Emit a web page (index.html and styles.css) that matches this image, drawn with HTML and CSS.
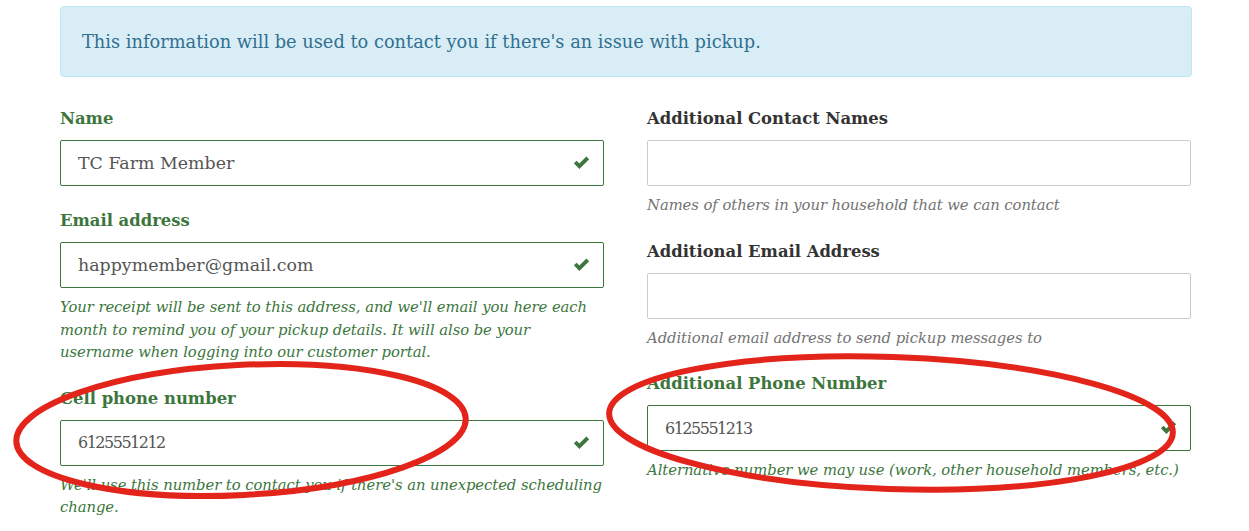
FILE: index.html
```html
<!DOCTYPE html>
<html>
<head>
<meta charset="utf-8">
<link rel="stylesheet" href="styles.css">
</head>
<body>
<div class="page">
  <div class="alert">This information will be used to contact you if there's an issue with pickup.</div>
  <div class="grid">
    <div class="col">
      <div class="group success">
        <label class="label">Name</label>
        <div class="field"><span class="value">TC Farm Member</span><svg class="check" viewBox="0 0 16 13"><path d="M0.8 6.8 L3.4 4.3 L6 6.9 L12.6 0.4 L15.2 3 L6 12.1 Z"/></svg></div>
      </div>
      <div class="group success">
        <label class="label">Email address</label>
        <div class="field"><span class="value">happymember@gmail.com</span><svg class="check" viewBox="0 0 16 13"><path d="M0.8 6.8 L3.4 4.3 L6 6.9 L12.6 0.4 L15.2 3 L6 12.1 Z"/></svg></div>
        <p class="help">Your receipt will be sent to this address, and we'll email you here each month to remind you of your pickup details. It will also be your username when logging into our customer portal.</p>
      </div>
      <div class="group success">
        <label class="label">Cell phone number</label>
        <div class="field"><span class="value num">6125551212</span><svg class="check" viewBox="0 0 16 13"><path d="M0.8 6.8 L3.4 4.3 L6 6.9 L12.6 0.4 L15.2 3 L6 12.1 Z"/></svg></div>
        <p class="help">We'll use this number to contact you if there's an unexpected scheduling change.</p>
      </div>
    </div>
    <div class="col">
      <div class="group">
        <label class="label">Additional Contact Names</label>
        <div class="field"></div>
        <p class="help">Names of others in your household that we can contact</p>
      </div>
      <div class="group">
        <label class="label">Additional Email Address</label>
        <div class="field"></div>
        <p class="help">Additional email address to send pickup messages to</p>
      </div>
      <div class="group success">
        <label class="label">Additional Phone Number</label>
        <div class="field"><span class="value num">6125551213</span><svg class="check" viewBox="0 0 16 13"><path d="M0.8 6.8 L3.4 4.3 L6 6.9 L12.6 0.4 L15.2 3 L6 12.1 Z"/></svg></div>
        <p class="help">Alternative number we may use (work, other household members, etc.)</p>
      </div>
    </div>
  </div>
  <svg class="marks" viewBox="0 0 1249 531" width="1249" height="531">
    <ellipse cx="241" cy="430" rx="225" ry="65" transform="rotate(-3 241 430)"/>
    <ellipse cx="891" cy="423" rx="282" ry="66" transform="rotate(2 891 423)"/>
  </svg>
</div>
</body>
</html>
```
FILE: styles.css
```css
html, body {
  margin: 0;
  padding: 0;
  background: #fff;
}
body {
  font-family: "DejaVu Serif", "Liberation Serif", serif;
  color: #333;
  width: 1249px;
  height: 531px;
  overflow: hidden;
}
.page {
  position: relative;
  padding: 6px 57px 0 60px;
}
.alert {
  box-sizing: border-box;
  height: 71px;
  background: #d9edf7;
  border: 1px solid #bce8f1;
  border-radius: 4px;
  color: #31708f;
  font-size: 17.8px;
  padding: 0 21px;
  display: flex;
  align-items: center;
}
.grid {
  margin-top: 31px;
  display: grid;
  grid-template-columns: 544px 544px;
  column-gap: 43px;
}
.group {
  margin-bottom: 24px;
}
.label {
  display: block;
  font-weight: bold;
  font-size: 16.4px;
  line-height: 22px;
  margin-bottom: 10px;
  color: #333;
}
.field {
  box-sizing: border-box;
  height: 46px;
  border: 1px solid #ccc;
  border-radius: 2px;
  display: flex;
  align-items: center;
  padding: 0 13px 0 17px;
}
.value {
  flex: 1;
  font-size: 17.4px;
  color: #555;
}
.value.num {
  font-size: 16px;
  letter-spacing: -1.5px;
}
.check {
  width: 17px;
  height: 14px;
  fill: #3c763d;
}
.help {
  margin: 8px 0 0;
  font-style: italic;
  font-size: 14.8px;
  line-height: 22.5px;
  color: #737373;
  letter-spacing: -0.06px;
}
.success .label,
.success .help {
  color: #3c763d;
}
.success .field {
  border-color: #3c763d;
}
.marks {
  position: absolute;
  left: 0;
  top: 0;
  pointer-events: none;
}
.marks ellipse {
  fill: none;
  stroke: #e3241b;
  stroke-width: 6;
}
```
